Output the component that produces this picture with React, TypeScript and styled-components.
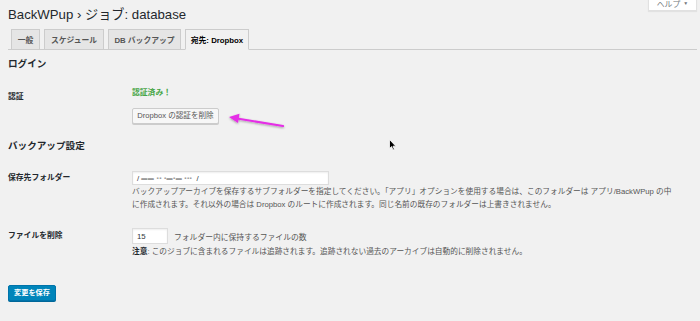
import React from 'react';
import styled, { createGlobalStyle } from 'styled-components';

const Global = createGlobalStyle`
  html, body { margin: 0; padding: 0; background: #f1f1f1; }
  body {
    font-family: "Liberation Sans", "Noto Sans CJK JP", sans-serif;
    color: #23282d;
    width: 700px;
    height: 321px;
    overflow: hidden;
    position: relative;
  }
`;

const Wrap = styled.div`
  position: relative;
  padding: 0 3px 0 8px;
`;

const HelpTab = styled.div`
  position: absolute;
  top: -6px;
  right: 3px;
  width: 49px;
  height: 17px;
  box-sizing: border-box;
  background: #fff;
  border: 1px solid #e1e1e1;
  border-top: none;
  box-shadow: 0 1px 1px rgba(0,0,0,0.06);
  font-size: 7.8px;
  color: #72777c;
  display: flex;
  align-items: center;
  justify-content: center;
  gap: 3px;
  padding-top: 2px;
`;

const Caret = styled.span`
  font-size: 5px;
`;

const Title = styled.h1`
  margin: 0;
  padding-top: 6px;
  font-size: 13.2px;
  line-height: 18px;
  font-weight: 400;
  color: #23282d;
`;

const TabsBar = styled.div`
  margin-top: 5px;
  display: flex;
  gap: 4px;
  padding-left: 3px;
  border-bottom: 1px solid #ccc;
`;

const Tab = styled.div<{ $w: number; $active?: boolean }>`
  width: ${p => p.$w}px;
  height: 21px;
  margin-bottom: -1px;
  box-sizing: border-box;
  border: 1px solid #ccc;
  border-bottom-color: ${p => (p.$active ? '#f1f1f1' : '#ccc')};
  background: ${p => (p.$active ? '#f1f1f1' : '#e5e5e5')};
  color: ${p => (p.$active ? '#000' : '#555')};
  font-size: 7.8px;
  font-weight: 700;
  display: flex;
  align-items: center;
  justify-content: center;
  white-space: nowrap;
`;

const SectionTitle = styled.h2<{ $mt: number }>`
  margin: ${p => p.$mt}px 0 0;
  font-size: 9.6px;
  line-height: 14px;
  font-weight: 700;
  color: #23282d;
`;

const Row = styled.div`
  display: grid;
  grid-template-columns: 124px 1fr;
`;

const Label = styled.div<{ $pt: number }>`
  padding-top: ${p => p.$pt}px;
  font-size: 7.8px;
  line-height: 11px;
  font-weight: 700;
  color: #23282d;
`;

const Field = styled.div<{ $pt: number }>`
  padding-top: ${p => p.$pt}px;
  display: flex;
  flex-direction: column;
  align-items: flex-start;
`;

const Success = styled.div`
  font-size: 7.8px;
  line-height: 11px;
  font-weight: 700;
  color: #46a546;
`;

const SecondaryButton = styled.button`
  margin-top: 10px;
  width: 87px;
  height: 16px;
  padding: 0;
  box-sizing: border-box;
  background: #f7f7f7;
  border: 1px solid #ccc;
  border-radius: 2px;
  box-shadow: 0 1px 0 #ccc;
  color: #555;
  font-family: inherit;
  font-size: 7.6px;
  line-height: 14px;
  white-space: nowrap;
`;

const TextInput = styled.div<{ $w: number; $h: number }>`
  width: ${p => p.$w}px;
  height: ${p => p.$h}px;
  box-sizing: border-box;
  background: #fff;
  border: 1px solid #ddd;
  box-shadow: inset 0 1px 2px rgba(0,0,0,0.07);
  font-size: 7.8px;
  color: #32373c;
  display: flex;
  align-items: center;
  padding-left: 4px;
  white-space: nowrap;
`;

const Blur = styled.span`
  color: #999;
  letter-spacing: 0.5px;
  font-size: 6px;
`;

const Description = styled.p<{ $mt: number }>`
  margin: ${p => p.$mt}px 0 0;
  font-size: 7.7px;
  line-height: 12.5px;
  color: #555;
  white-space: nowrap;
`;

const Inline = styled.div`
  display: flex;
  align-items: center;
  gap: 6px;
`;

const InlineText = styled.span`
  font-size: 7.8px;
  color: #555;
`;

const Strong = styled.strong`
  color: #23282d;
`;

const PrimaryButton = styled.button`
  margin-top: 26px;
  width: 48px;
  height: 16px;
  padding: 0;
  box-sizing: border-box;
  background: #0085ba;
  border: 1px solid #0073aa;
  border-radius: 2px;
  box-shadow: 0 1px 0 #006799;
  color: #fff;
  font-family: inherit;
  font-size: 7.2px;
  font-weight: 700;
  line-height: 14px;
  display: block;
`;

const Overlay = styled.svg<{ $x: number; $y: number }>`
  position: absolute;
  left: ${p => p.$x}px;
  top: ${p => p.$y}px;
  overflow: visible;
  pointer-events: none;
`;

export default function App() {
  return (
    <>
      <Global />
      <Wrap>
        <HelpTab>
          ヘルプ <Caret>▼</Caret>
        </HelpTab>
        <Title>BackWPup › ジョブ: database</Title>
        <TabsBar>
          <Tab $w={29}>一般</Tab>
          <Tab $w={60}>スケジュール</Tab>
          <Tab $w={73}>DB バックアップ</Tab>
          <Tab $w={64} $active>宛先: Dropbox</Tab>
        </TabsBar>

        <SectionTitle $mt={7}>ログイン</SectionTitle>
        <Row>
          <Label $pt={20}>認証</Label>
          <Field $pt={16}>
            <Success>認証済み！</Success>
            <SecondaryButton>Dropbox の認証を削除</SecondaryButton>
          </Field>
        </Row>

        <SectionTitle $mt={15}>バックアップ設定</SectionTitle>
        <Row>
          <Label $pt={19}>保存先フォルダー</Label>
          <Field $pt={18}>
            <TextInput $w={197} $h={14}>
              /&nbsp;<Blur>▬▬ ▪▪ ▪▬▪▬ ▪▪▪&nbsp;&nbsp;</Blur>/
            </TextInput>
            <Description $mt={1}>
              バックアップアーカイブを保存するサブフォルダーを指定してください。「アプリ」オプションを使用する場合は、このフォルダーは アプリ/BackWPup の中
              <br />
              に作成されます。それ以外の場合は Dropbox のルートに作成されます。同じ名前の既存のフォルダーは上書きされません。
            </Description>
          </Field>
        </Row>

        <Row>
          <Label $pt={19}>ファイルを削除</Label>
          <Field $pt={17}>
            <Inline>
              <TextInput $w={36} $h={16}>15</TextInput>
              <InlineText>フォルダー内に保持するファイルの数</InlineText>
            </Inline>
            <Description $mt={2}>
              <Strong>注意</Strong>: このジョブに含まれるファイルは追跡されます。追跡されない過去のアーカイブは自動的に削除されません。
            </Description>
          </Field>
        </Row>

        <PrimaryButton>変更を保存</PrimaryButton>
      </Wrap>

      <Overlay $x={224} $y={110} width="66" height="22" viewBox="0 0 66 22">
        <defs>
          <filter id="sh" x="-20%" y="-50%" width="140%" height="200%">
            <feDropShadow dx="0" dy="1" stdDeviation="0.8" floodColor="#000" floodOpacity="0.35" />
          </filter>
        </defs>
        <g filter="url(#sh)">
          <line x1="59" y1="16" x2="13" y2="8.5" stroke="#e52ee6" strokeWidth="2.2" strokeLinecap="round" />
          <polygon points="5,7 15.5,3.8 14,13" fill="#e52ee6" />
        </g>
      </Overlay>

      <Overlay $x={389} $y={139} width="8" height="12" viewBox="0 0 8 12">
        <path d="M0.5,0.5 L0.5,9.5 L2.6,7.6 L4,11 L5.4,10.4 L4,7.2 L6.8,7.2 Z" fill="#000" stroke="#fff" strokeWidth="0.8" />
      </Overlay>
    </>
  );
}
